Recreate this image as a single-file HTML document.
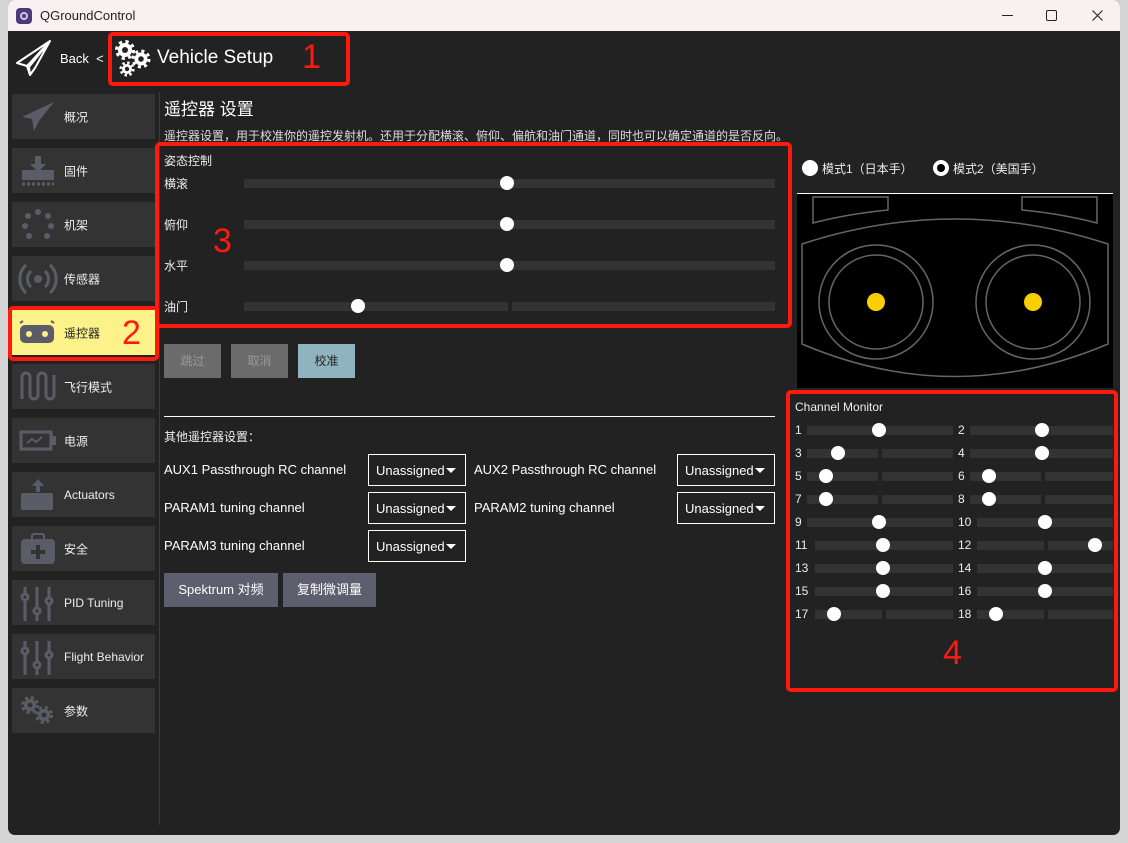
<!DOCTYPE html>
<html><head><meta charset="utf-8"><style>
*{margin:0;padding:0;box-sizing:border-box}
body{width:1128px;height:843px;background:#d4d4d4;position:relative;overflow:hidden;font-family:"Liberation Sans","Noto Sans CJK SC",sans-serif;color:#fff}
.a{position:absolute}
#win{left:8px;top:0;width:1112px;height:835px;background:#222;border-radius:7px;overflow:hidden}
#tb{left:0;top:0;width:1112px;height:31px;background:#f8f0f1;color:#222;font-size:13px}
.btn{position:absolute;left:4px;width:143px;height:45px;background:#333;font-size:12px;color:#eee}
.btn span{position:absolute;left:52px;top:50%;transform:translateY(-50%)}
.btn svg{position:absolute;left:6px;top:5px}
.red{position:absolute;border:4px solid #ff1a10;border-radius:5px}
.rn{position:absolute;color:#ff1a10;font-size:34px;font-family:"Liberation Sans",sans-serif}
.lbl{position:absolute;font-size:12px;color:#eee}
.tr{position:absolute;height:9px;background:#333}
.th{position:absolute;width:14px;height:14px;border-radius:50%;background:#fff}
.sel{position:absolute;width:98px;height:32px;border:1px solid #fff;font-size:13px;padding:8px 0 0 7px}
.sel:after{content:"";position:absolute;right:9px;top:13px;border-left:5px solid transparent;border-right:5px solid transparent;border-top:5px solid #fff}
.pb{position:absolute;height:34px;font-size:12px;text-align:center;line-height:34px}
.ch{position:absolute;font-size:12px;color:#eee}
</style></head><body>
<div id="win" class="a">
 <div id="tb" class="a">
  <div class="a" style="left:8px;top:8px;width:16px;height:16px;border-radius:4px;background:#4b3a78"><div class="a" style="left:4px;top:4px;width:8px;height:8px;border-radius:50%;border:2px solid #cfc4ee"></div></div>
  <div class="a" style="left:32px;top:8px">QGroundControl</div>
  <div class="a" style="left:994px;top:15px;width:11px;height:1px;background:#222"></div>
  <div class="a" style="left:1038px;top:10px;width:11px;height:11px;border:1px solid #222;border-radius:2px"></div>
  <svg class="a" style="left:1084px;top:10px" width="11" height="11"><path d="M0.5 0.5L10.5 10.5M10.5 0.5L0.5 10.5" stroke="#222" stroke-width="1.1"/></svg>
 </div>
</div>
<!-- header -->
<svg class="a" style="left:15px;top:39px" width="38" height="38" viewBox="0 0 38 38"><path d="M35 2 L2 24 L12 27 L15 36 L20 29 L35 2 Z M12 27 L35 2 M15 36 L14 28 L35 2" fill="none" stroke="#fff" stroke-width="2" stroke-linejoin="round"/></svg>
<div class="a" style="left:60px;top:51px;font-size:13px">Back&nbsp; &lt;</div>
<div class="red" style="left:108px;top:32px;width:242px;height:54px"></div>
<svg class="a" style="left:113px;top:38px" width="40" height="40">
 <g fill="#fff"><circle cx="12" cy="12" r="7"/><circle cx="12" cy="12" r="8.5" fill="none" stroke="#fff" stroke-width="3" stroke-dasharray="3.3 3.4"/>
 <circle cx="28" cy="21" r="6.5"/><circle cx="28" cy="21" r="8" fill="none" stroke="#fff" stroke-width="3" stroke-dasharray="3 3.3"/>
 <circle cx="14" cy="31" r="5"/><circle cx="14" cy="31" r="6.3" fill="none" stroke="#fff" stroke-width="2.6" stroke-dasharray="2.4 2.55"/></g>
 <g fill="#222"><circle cx="12" cy="12" r="3"/><circle cx="28" cy="21" r="2.8"/><circle cx="14" cy="31" r="2.2"/></g>
</svg>
<div class="a" style="left:157px;top:47px;font-size:19px">Vehicle Setup</div>
<div class="rn" style="left:302px;top:38px">1</div>
<!-- sidebar -->
<div class="a" style="left:159px;top:92px;width:1px;height:733px;background:#3c3c3c"></div>
<div class="btn" style="left:12px;top:94px"><svg width="40" height="35"><path d="M36 3 L4 18 L14 20 L16 32 L21 22 Z" fill="#5c5c68"/></svg><span>概况</span></div>
<div class="btn" style="left:12px;top:148px"><svg width="40" height="35"><path d="M17 3h6v8h5l-8 8-8-8h5z M4 17h32v10H4z" fill="#5c5c68"/><path d="M4 31h32" stroke="#5c5c68" stroke-width="3" stroke-dasharray="3 2"/></svg><span>固件</span></div>
<div class="btn" style="left:12px;top:202px"><svg width="40" height="35"><g fill="#5c5c68"><circle cx="20" cy="5" r="3"/><circle cx="30" cy="9" r="3"/><circle cx="33" cy="19" r="3"/><circle cx="29" cy="29" r="3"/><circle cx="11" cy="29" r="3"/><circle cx="7" cy="19" r="3"/><circle cx="10" cy="9" r="3"/></g></svg><span>机架</span></div>
<div class="btn" style="left:12px;top:256px"><svg width="40" height="35"><circle cx="20" cy="18" r="4" fill="#5c5c68"/><path d="M13 10a11 11 0 0 0 0 16M27 10a11 11 0 0 1 0 16M8 4a19 19 0 0 0 0 28M32 4a19 19 0 0 1 0 28" fill="none" stroke="#5c5c68" stroke-width="3"/></svg><span>传感器</span></div>
<div class="btn" style="left:12px;top:310px;background:#fdf28a;color:#222"><svg width="40" height="35"><rect x="2" y="10" width="34" height="18" rx="5" fill="#5c5c68"/><path d="M2 8l3-2M36 8l-3-2" stroke="#5c5c68" stroke-width="2"/><circle cx="11" cy="19" r="3" fill="#fdf28a"/><circle cx="27" cy="19" r="3" fill="#fdf28a"/></svg><span>遥控器</span></div>
<div class="red" style="left:8px;top:306px;width:151px;height:55px"></div>
<div class="rn" style="left:122px;top:314px">2</div>
<div class="btn" style="left:12px;top:364px"><svg width="40" height="35"><path d="M4 30V8a4 4 0 0 1 8 0v18a4 4 0 0 0 8 0V8a4 4 0 0 1 8 0v18a4 4 0 0 0 8 0V6" fill="none" stroke="#5c5c68" stroke-width="3"/></svg><span>飞行模式</span></div>
<div class="btn" style="left:12px;top:418px"><svg width="40" height="35"><rect x="3" y="9" width="30" height="17" fill="none" stroke="#5c5c68" stroke-width="3"/><rect x="34" y="13" width="4" height="9" fill="#5c5c68"/><path d="M9 20l5-4 4 3 6-5" stroke="#5c5c68" stroke-width="2" fill="none"/></svg><span>电源</span></div>
<div class="btn" style="left:12px;top:472px"><svg width="40" height="35"><path d="M20 2l-6 7h4v6h4V9h4z" fill="#5c5c68"/><rect x="3" y="16" width="32" height="17" rx="2" fill="#5c5c68"/></svg><span>Actuators</span></div>
<div class="btn" style="left:12px;top:526px"><svg width="40" height="35"><rect x="3" y="8" width="34" height="25" rx="4" fill="#5c5c68"/><rect x="14" y="3" width="12" height="7" rx="2" fill="none" stroke="#5c5c68" stroke-width="2"/><path d="M20 14v14M13 21h14" stroke="#333" stroke-width="4"/></svg><span>安全</span></div>
<div class="btn" style="left:12px;top:580px"><svg width="40" height="38"><g stroke="#5c5c68" stroke-width="3" fill="#333"><path d="M7 2v34M19 2v34M31 2v34"/><circle cx="7" cy="12" r="3"/><circle cx="19" cy="26" r="3"/><circle cx="31" cy="16" r="3"/></g></svg><span>PID Tuning</span></div>
<div class="btn" style="left:12px;top:634px"><svg width="40" height="38"><g stroke="#5c5c68" stroke-width="3" fill="#333"><path d="M7 2v34M19 2v34M31 2v34"/><circle cx="7" cy="12" r="3"/><circle cx="19" cy="26" r="3"/><circle cx="31" cy="16" r="3"/></g></svg><span>Flight Behavior</span></div>
<div class="btn" style="left:12px;top:688px"><svg width="40" height="35"><g fill="#5c5c68"><circle cx="12" cy="12" r="6"/><circle cx="12" cy="12" r="7.5" fill="none" stroke="#5c5c68" stroke-width="3" stroke-dasharray="3 3"/><circle cx="26" cy="22" r="6"/><circle cx="26" cy="22" r="7.5" fill="none" stroke="#5c5c68" stroke-width="3" stroke-dasharray="3 3"/></g><circle cx="12" cy="12" r="2.5" fill="#333"/><circle cx="26" cy="22" r="2.5" fill="#333"/></svg><span>参数</span></div>
<!-- main -->
<div class="a" style="left:164px;top:95px;font-size:17px">遥控器 设置</div>
<div class="a" style="left:164px;top:127px;font-size:12px;color:#ddd">遥控器设置，用于校准你的遥控发射机。还用于分配横滚、俯仰、偏航和油门通道，同时也可以确定通道的是否反向。</div>
<div class="red" style="left:155px;top:142px;width:637px;height:186px"></div>
<div class="lbl" style="left:164px;top:152px">姿态控制</div>
<div class="lbl" style="left:164px;top:175px">横滚</div>
<div class="lbl" style="left:164px;top:216px">俯仰</div>
<div class="lbl" style="left:164px;top:257px">水平</div>
<div class="lbl" style="left:164px;top:298px">油门</div>
<div class="tr" style="left:244px;top:179px;width:531px"></div><div class="th" style="left:500px;top:176px"></div>
<div class="tr" style="left:244px;top:220px;width:531px"></div><div class="th" style="left:500px;top:217px"></div>
<div class="tr" style="left:244px;top:261px;width:531px"></div><div class="th" style="left:500px;top:258px"></div>
<div class="tr" style="left:244px;top:302px;width:264px"></div><div class="tr" style="left:512px;top:302px;width:263px"></div><div class="th" style="left:351px;top:299px"></div>
<div class="rn" style="left:213px;top:222px">3</div>
<div class="pb" style="left:164px;top:344px;width:57px;background:#6b6b6b;color:#999">跳过</div>
<div class="pb" style="left:231px;top:344px;width:57px;background:#6b6b6b;color:#999">取消</div>
<div class="pb" style="left:298px;top:344px;width:57px;background:#8fb4c0;color:#222">校准</div>
<div class="a" style="left:164px;top:416px;width:611px;height:1px;background:#fff"></div>
<div class="lbl" style="left:164px;top:428px">其他遥控器设置：</div>
<div class="a" style="left:164px;top:462px;font-size:13px">AUX1 Passthrough RC channel</div>
<div class="a" style="left:164px;top:500px;font-size:13px">PARAM1 tuning channel</div>
<div class="a" style="left:164px;top:538px;font-size:13px">PARAM3 tuning channel</div>
<div class="a" style="left:474px;top:462px;font-size:13px">AUX2 Passthrough RC channel</div>
<div class="a" style="left:474px;top:500px;font-size:13px">PARAM2 tuning channel</div>
<div class="sel" style="left:368px;top:454px">Unassigned</div>
<div class="sel" style="left:368px;top:492px">Unassigned</div>
<div class="sel" style="left:368px;top:530px">Unassigned</div>
<div class="sel" style="left:677px;top:454px">Unassigned</div>
<div class="sel" style="left:677px;top:492px">Unassigned</div>
<div class="pb" style="left:164px;top:573px;width:114px;background:#5f5e6e;font-size:13px">Spektrum 对频</div>
<div class="pb" style="left:283px;top:573px;width:93px;background:#5f5e6e;font-size:13px">复制微调量</div>
<!-- right -->
<div class="a" style="left:802px;top:160px;width:16px;height:16px;border-radius:50%;background:#fff"></div>
<div class="lbl" style="left:822px;top:160px">模式1（日本手）</div>
<div class="a" style="left:933px;top:160px;width:16px;height:16px;border-radius:50%;background:#fff"><div class="a" style="left:4px;top:4px;width:8px;height:8px;border-radius:50%;background:#000"></div></div>
<div class="lbl" style="left:953px;top:160px">模式2（美国手）</div>
<div class="a" style="left:797px;top:193px;width:316px;height:1px;background:#fff"></div>
<svg class="a" style="left:797px;top:194px" width="316" height="194"><rect width="316" height="194" fill="#000"/><g fill="none" stroke="#666" stroke-width="1.5"><path d="M16 3H91V16Q50 20 16 29Z"/><path d="M300 3H225V16Q266 20 300 29Z"/><path d="M5 50Q158 0 311 50V150Q158 215 5 150Z"/><circle cx="79" cy="108" r="57"/><circle cx="79" cy="108" r="47"/><circle cx="236" cy="108" r="57"/><circle cx="236" cy="108" r="47"/></g><circle cx="79" cy="108" r="9" fill="#f9cf00"/><circle cx="236" cy="108" r="9" fill="#f9cf00"/></svg>
<div class="red" style="left:786px;top:390px;width:332px;height:302px"></div>
<div class="a" style="left:795px;top:400px;font-size:12px;color:#eee">Channel Monitor</div>
<div class="rn" style="left:943px;top:634px">4</div>
<div id="chs"></div>
<script>
var d=[
[1,795,[[807,146]],879],[2,958,[[970,143]],1042],
[3,795,[[807,71],[882,71]],838],[4,958,[[970,143]],1042],
[5,795,[[807,71],[882,71]],826],[6,958,[[970,71],[1045,68]],989],
[7,795,[[807,71],[882,71]],826],[8,958,[[970,71],[1045,68]],989],
[9,795,[[807,146]],879],[10,958,[[977,136]],1045],
[11,795,[[815,138]],883],[12,958,[[977,67],[1048,65]],1095],
[13,795,[[815,138]],883],[14,958,[[977,136]],1045],
[15,795,[[815,138]],883],[16,958,[[977,136]],1045],
[17,795,[[815,67],[886,67]],834],[18,958,[[977,67],[1048,65]],996]];
var h="";d.forEach(function(r,i){var y=430+23*Math.floor(i/2);
h+='<div class="ch" style="left:'+r[1]+'px;top:'+(y-7)+'px">'+r[0]+'</div>';
r[2].forEach(function(t){h+='<div class="tr" style="left:'+t[0]+'px;top:'+(y-4)+'px;width:'+t[1]+'px"></div>'});
h+='<div class="th" style="left:'+(r[3]-7)+'px;top:'+(y-7)+'px"></div>';});
document.getElementById("chs").innerHTML=h;
</script>
</body></html>
